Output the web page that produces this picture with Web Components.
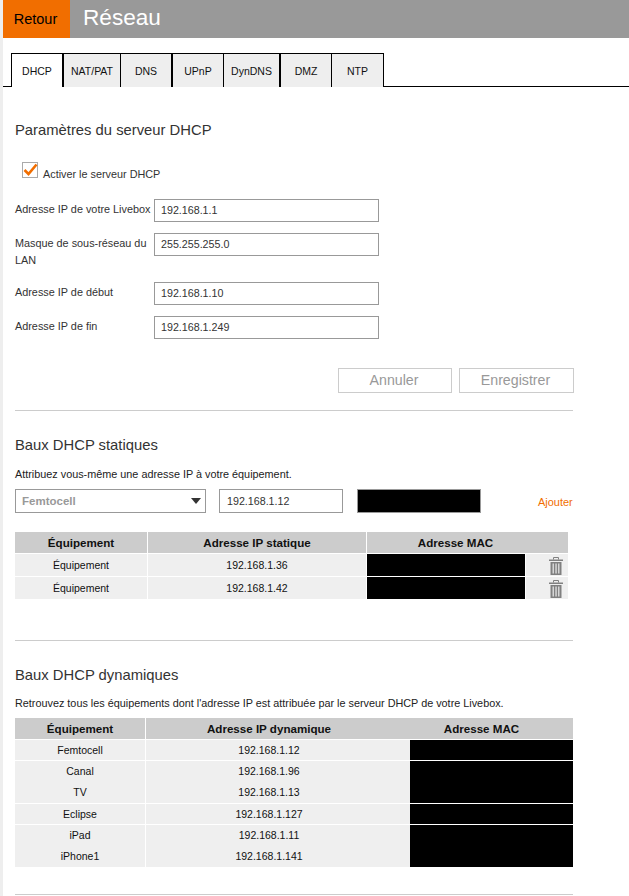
<!DOCTYPE html>
<html lang="fr">
<head>
<meta charset="utf-8">
<title>Réseau</title>
<style>
  html, body { margin: 0; padding: 0; background: #fff; }
  body { font-family: "Liberation Sans", Arial, sans-serif; color: #333; height: 896px; overflow: hidden; border-left: 3px solid #eee; box-sizing: border-box; }
  .content { padding: 0 55px 0 12px; display: block; }
</style>
</head>
<body>
<top-bar back="Retour" title="Réseau"></top-bar>
<tab-bar tabs="DHCP:53,NAT/PAT:57,DNS:52,UPnP:51,DynDNS:57,DMZ:51,NTP:52"></tab-bar>
<div class="content">
  <section-title style="margin-top:34px">Paramètres du serveur DHCP</section-title>
  <check-row style="margin-top:23px">Activer le serveur DHCP</check-row>
  <form-field value="192.168.1.1" style="margin-top:20px;height:23px">Adresse IP de votre Livebox</form-field>
  <form-field value="255.255.255.0" style="margin-top:11px;height:38px">Masque de sous-réseau du LAN</form-field>
  <form-field value="192.168.1.10" style="margin-top:11px;height:23px">Adresse IP de début</form-field>
  <form-field value="192.168.1.249" style="margin-top:11px;height:23px">Adresse IP de fin</form-field>
  <form-actions style="margin-top:29px"></form-actions>
  <section-rule style="margin-top:17px"></section-rule>
  <section-title style="margin-top:25px">Baux DHCP statiques</section-title>
  <section-note style="margin-top:13px">Attribuez vous-même une adresse IP à votre équipement.</section-note>
  <static-add style="margin-top:8px" device="Femtocell" ip="192.168.1.12"></static-add>
  <lease-table id="statics" style="margin-top:19px"></lease-table>
  <section-rule style="margin-top:41px"></section-rule>
  <section-title style="margin-top:25px">Baux DHCP dynamiques</section-title>
  <section-note style="margin-top:12px">Retrouvez tous les équipements dont l'adresse IP est attribuée par le serveur DHCP de votre Livebox.</section-note>
  <lease-table id="dynamics" style="margin-top:8px"></lease-table>
  <section-rule style="margin-top:27px"></section-rule>
</div>
<script>
class TopBar extends HTMLElement {
  connectedCallback() {
    this.attachShadow({ mode: 'open' });
    this.shadowRoot.innerHTML = `
      <style>
        :host { display: flex; height: 38px; background: #999; }
        a { width: 67px; padding-right: 2px; box-sizing: border-box; background: #f16e00; color: #000; font-size: 14.5px; display: flex; align-items: center; justify-content: center; }
        h1 { margin: 0 0 0 13px; font-size: 22.6px; font-weight: 400; color: #fff; line-height: 35px; }
      </style>
      <a>${this.getAttribute('back')}</a>
      <h1>${this.getAttribute('title')}</h1>`;
  }
}
customElements.define('top-bar', TopBar);

class TabBar extends HTMLElement {
  connectedCallback() {
    this.attachShadow({ mode: 'open' });
    const tabs = this.getAttribute('tabs').split(',').map(t => t.split(':'));
    this.shadowRoot.innerHTML = `
      <style>
        :host { display: flex; margin-top: 15px; padding-left: 8px; border-bottom: 1px solid #000; height: 33px; }
        div { box-sizing: border-box; height: 34px; background: #eee; border-top: 1px solid #000; border-right: 1px solid #000; font-size: 10.5px; color: #111; display: flex; align-items: center; justify-content: center; }
        div.on { background: #fff; border-left: 1px solid #000; border-right: 2px solid #000; }
        div.sep { border-right-width: 2px; }
      </style>
      ${tabs.map(([name, w], i) => `<div class="${i === 0 ? 'on' : ''}${i === 2 || i === 4 ? 'sep' : ''}" style="width:${w}px">${name}</div>`).join('')}`;
  }
}
customElements.define('tab-bar', TabBar);

class SectionTitle extends HTMLElement {
  constructor() {
    super();
    this.attachShadow({ mode: 'open' });
    this.shadowRoot.innerHTML = `
      <style>:host { display: block; font-size: 14.8px; line-height: 18px; color: #333; }</style>
      <slot></slot>`;
  }
}
customElements.define('section-title', SectionTitle);

class SectionNote extends HTMLElement {
  constructor() {
    super();
    this.attachShadow({ mode: 'open' });
    this.shadowRoot.innerHTML = `
      <style>:host { display: block; font-size: 10.83px; line-height: 14px; color: #222; white-space: nowrap; }</style>
      <slot></slot>`;
  }
}
customElements.define('section-note', SectionNote);

class SectionRule extends HTMLElement {
  constructor() {
    super();
    this.attachShadow({ mode: 'open' });
    this.shadowRoot.innerHTML = `<style>:host { display: block; height: 1px; width: 558px; background: #ccc; }</style>`;
  }
}
customElements.define('section-rule', SectionRule);

class CheckRow extends HTMLElement {
  constructor() {
    super();
    this.attachShadow({ mode: 'open' });
    this.shadowRoot.innerHTML = `
      <style>
        :host { display: flex; align-items: flex-start; gap: 4px; padding-left: 7px; font-size: 10.83px; color: #333; height: 17px; }
        svg { width: 17px; height: 17px; flex: none; }
        span { line-height: 13px; margin-top: 6px; }
      </style>
      <svg viewBox="0 0 17 17"><rect x=".5" y=".5" width="15" height="15" fill="#fff" stroke="#aaa"/><path d="M2.500 8 L6.500 12 L14.500 2.500" fill="none" stroke="#f16e00" stroke-width="2.6"/></svg>
      <span><slot></slot></span>`;
  }
}
customElements.define('check-row', CheckRow);

class FormField extends HTMLElement {
  constructor() {
    super();
    this.attachShadow({ mode: 'open' });
    this.shadowRoot.innerHTML = `
      <style>
        :host { display: grid; grid-template-columns: 139px 225px; font-size: 10.85px; color: #333; line-height: 17px; }
        label { padding-top: 2px; white-space: normal; }
        input { box-sizing: border-box; width: 225px; height: 23px; border: 1px solid #999; padding: 0 6px 1px; font: 10.7px "Liberation Sans", Arial, sans-serif; color: #333; margin: 0; outline: none; }
      </style>
      <label><slot></slot></label>
      <input type="text">`;
  }
  connectedCallback() {
    this.shadowRoot.querySelector('input').setAttribute('value', this.getAttribute('value'));
  }
}
customElements.define('form-field', FormField);

class FormActions extends HTMLElement {
  constructor() {
    super();
    this.attachShadow({ mode: 'open' });
    this.shadowRoot.innerHTML = `
      <style>
        :host { display: flex; justify-content: flex-end; gap: 7px; width: 559px; }
        button { box-sizing: border-box; height: 25px; background: #fff; border: 1px solid #ccc; color: #999; font: 14.2px "Liberation Sans", Arial, sans-serif; padding: 0 2px 2px 0; }
      </style>
      <button style="width:114px">Annuler</button>
      <button style="width:115px">Enregistrer</button>`;
  }
}
customElements.define('form-actions', FormActions);

class StaticAdd extends HTMLElement {
  connectedCallback() {
    this.attachShadow({ mode: 'open' });
    this.shadowRoot.innerHTML = `
      <style>
        :host { display: flex; height: 24px; font-size: 10.7px; }
        .sel, .ip, .mac { box-sizing: border-box; height: 24px; border: 1px solid #999; display: flex; align-items: center; padding: 0 6px; }
        .sel { width: 191px; justify-content: space-between; color: #999; font-weight: 700; font-size: 11.5px; }
        .sel i { width: 0; height: 0; border: 5px solid transparent; border-top: 6px solid #333; border-bottom: 0; margin-right: -2px; }
        .ip { width: 124px; margin-left: 13px; color: #333; padding-left: 7px; }
        .mac { width: 124px; margin-left: 14px; background: #000; }
        a { margin-left: 57px; color: #f16e00; font-size: 10.95px; align-self: flex-end; line-height: 16px; margin-bottom: 3px; }
      </style>
      <div class="sel">${this.getAttribute('device')}<i></i></div>
      <div class="ip">${this.getAttribute('ip')}</div>
      <div class="mac"></div>
      <a>Ajouter</a>`;
  }
}
customElements.define('static-add', StaticAdd);

const trash = `<svg width="14" height="18" viewBox="0 0 14 18"><path d="M4.500 2.500v-2h5v2" fill="none" stroke="#808080"/><path d="M0 2.500h14v1.500H0z" fill="#808080"/><path d="M1.500 5h11v13h-11z" fill="#808080"/><path d="M3.500 6.500h1.500v10H3.500zM6.300 6.500h1.500v10H6.300zM9 6.500h1.500v10H9z" fill="#d6d6d6"/></svg>`;

class LeaseTable extends HTMLElement {
  constructor() {
    super();
    this.attachShadow({ mode: 'open' });
  }
  // columns: widths of the body columns; macPad: shift of the centred text left of the black cells
  setData({ heads, widths, rows, lineH, singleH, withTrash, macPad, ipPad, headSep }) {
    const body = rows.map(r => `<tr>
        <td style="line-height:${r[0].length > 1 ? lineH : singleH}px">${r[0].join('<br>')}</td>
        <td class="ip" style="line-height:${r[1].length > 1 ? lineH : singleH}px;padding-right:${ipPad}px">${r[1].join('<br>')}</td>
        <td class="mac"></td>
        ${withTrash ? `<td class="del">${trash}</td>` : ''}
      </tr>`).join('');
    this.shadowRoot.innerHTML = `
      <style>
        :host { display: block; font-size: 10.5px; color: #111; }
        table { border-collapse: separate; border-spacing: 0; table-layout: fixed; width: ${widths.reduce((a, b) => a + b, 0)}px; }
        th { background: #ccc; height: 21px; font-size: 11.6px; padding: 0; border-bottom: 1px solid #fff; border-right: 1px solid #fff; }
        th.nosep { border-right: 0; }
        th:last-child { border-right: 0; }
        td { background: #efefef; padding: 0; text-align: center; border-right: 1px solid #fff; border-bottom: 1px solid #fff; }
        td.ip.nosep { border-right: 0; }
        tr:last-child td { border-bottom: 0; }
        td:last-child { border-right: 0; }
        td.mac { background: #000; }
        td.del svg { display: block; margin: 2px 0 0 23px; }
      </style>
      <table>
        <colgroup>${widths.map(w => `<col style="width:${w}px">`).join('')}</colgroup>
        <thead><tr>
          <th>${heads[0]}</th>
          <th class="${headSep ? '' : 'nosep'}" style="padding-right:${ipPad}px">${heads[1]}</th>
          <th colspan="${withTrash ? 2 : 1}" style="padding-right:${macPad}px">${heads[2]}</th>
        </tr></thead>
        <tbody>${body}</tbody>
      </table>`;
    if (!headSep) this.shadowRoot.querySelectorAll('td.ip').forEach(td => td.classList.add('nosep'));
  }
}
customElements.define('lease-table', LeaseTable);

document.getElementById('statics').setData({
  heads: ['Équipement', 'Adresse IP statique', 'Adresse MAC'],
  widths: [133, 219, 159, 42],
  lineH: 22,
  singleH: 22,
  withTrash: true,
  macPad: 24,
  ipPad: 0,
  headSep: true,
  rows: [[['Équipement'], ['192.168.1.36']], [['Équipement'], ['192.168.1.42']]]
});
document.getElementById('dynamics').setData({
  heads: ['Équipement', 'Adresse IP dynamique', 'Adresse MAC'],
  widths: [131, 264, 163],
  lineH: 21,
  singleH: 20,
  withTrash: false,
  macPad: 20,
  ipPad: 18,
  headSep: false,
  rows: [
    [['Femtocell'], ['192.168.1.12']],
    [['Canal', 'TV'], ['192.168.1.96', '192.168.1.13']],
    [['Eclipse'], ['192.168.1.127']],
    [['iPad', 'iPhone1'], ['192.168.1.11', '192.168.1.141']]
  ]
});
</script>
</body>
</html>
